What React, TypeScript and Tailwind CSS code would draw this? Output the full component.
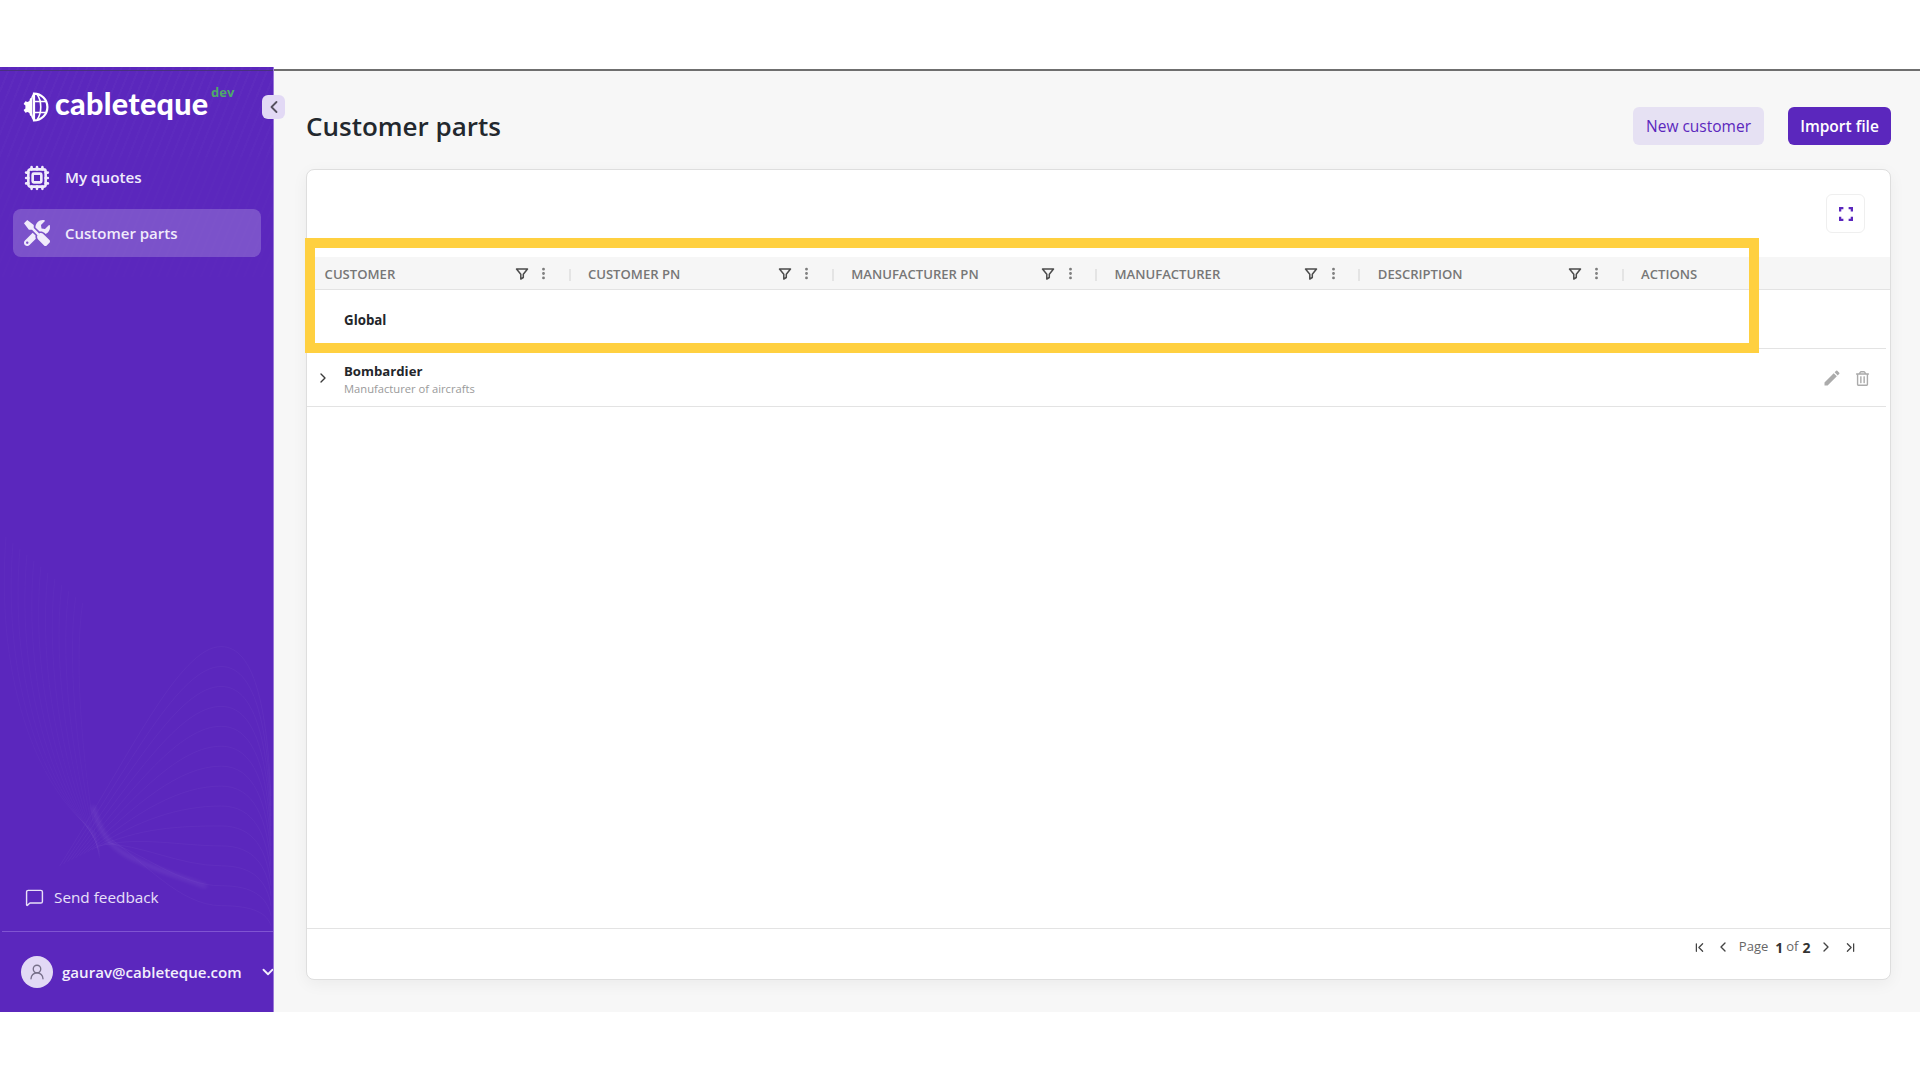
import { ChevronDown, ChevronFirst, ChevronLast, ChevronLeft, ChevronRight, Cpu, EllipsisVertical, MessageSquare, UserRound } from "lucide-react";
import { FaRegTrashAlt, FaTools } from "react-icons/fa";
import { MdEdit } from "react-icons/md";

const columns = ["Customer", "Customer PN", "Manufacturer PN", "Manufacturer", "Description"];
const contours = Array.from({ length: 14 }, (_, i) => i);
const rings = Array.from({ length: 12 }, (_, i) => i);

function LogoMark() {
  return (
    <svg viewBox="0 0 30 30" className="h-[30px] w-[30px] shrink-0" fill="none">
      {/* half gear */}
      <path d="M10.4 5.6 8 6.4 7.4 9 5.6 10 3.4 9.2 1.6 12l1.8 1.5v3L1.6 18l1.8 2.8 2.2-.8 1.8 1 .6 2.6 2.4.8z" fill="#fff" />
      {/* half globe */}
      <path d="M12 1.6a13.4 13.4 0 1 1 0 26.8z" stroke="#fff" strokeWidth="2.2" />
      <path d="M12 1.6C7.5 8 7.5 22 12 28.4" stroke="#fff" strokeWidth="1.6" />
      <path d="M15 2.2c5 6.5 5 19 0 25.6" stroke="#fff" strokeWidth="1.6" />
      <path d="M12 9.5h13M12 20.5h13" stroke="#fff" strokeWidth="1.5" />
    </svg>
  );
}

function SidebarArt() {
  return (
    <svg viewBox="0 0 274 945" className="pointer-events-none absolute inset-0 h-full w-full" fill="none">
      {contours.map((i) => (
        <path
          key={i}
          d={`M${60 + i * 4} ${800 - i * 2} C ${130 + i} ${690 + i * 8}, ${180} ${580 + i * 20}, ${222} ${580 + i * 20} C ${255} ${580 + i * 20}, ${268} ${640 + i * 16}, ${272} ${730 + i * 10}`}
          stroke="#fff"
          strokeOpacity="0.035"
        />
      ))}
      {rings.map((i) => (
        <path
          key={i}
          d={`M${6 + i * 7} ${470 + i * 6} C ${i * 7 - 4} ${600}, ${30 + i * 5} ${720}, ${100} ${770 + i * 2}`}
          stroke="#fff"
          strokeOpacity="0.025"
        />
      ))}
      <path
        d="M93 740 C 100 765, 108 778, 125 788 C 150 803, 180 810, 207 821"
        stroke="#fff"
        strokeOpacity="0.1"
        strokeWidth="3"
        className="blur-[2px]"
      />
    </svg>
  );
}

function HeaderCell({ label }: { label: string }) {
  return (
    <div className="relative flex h-full w-[263.3px] shrink-0 items-center pl-4 pt-[3px]">
      <span className="text-[13.1px] font-semibold uppercase leading-none text-[#777]">{label}</span>
      <svg viewBox="0 0 14 14" className="absolute left-[206px] top-[10px] h-[14px] w-[14px]" fill="none" stroke="#4b4b4b" strokeWidth="1.5" strokeLinejoin="round">
        <path d="M1.5 2h11L8.3 7.2v3.3L5.8 12V7.2z" />
      </svg>
      <EllipsisVertical className="absolute left-[227.5px] top-[9px] h-[15px] w-[15px] text-[#7a7a7a]" strokeWidth={2.5} />
      <span className="absolute left-[260px] top-[12px] h-[12px] w-[2px] bg-[#e4e4e4]" />
    </div>
  );
}

export default function App() {
  return (
    <div className="relative h-screen w-full overflow-hidden bg-white pt-[67px] font-['Open_Sans',sans-serif]">
      <div className="flex h-[945px]">
        <aside className="relative flex w-[274px] shrink-0 flex-col overflow-hidden border-r border-[#9a78d8] bg-[#5b27bd] text-white">
          <div className="absolute inset-x-0 top-0 h-[300px] bg-[repeating-linear-gradient(112deg,rgba(255,255,255,0.02)_0px,rgba(255,255,255,0.02)_2px,transparent_2px,transparent_8px)] [mask-image:linear-gradient(to_bottom,black,transparent)]" />
          <SidebarArt />
          <div className="relative mt-[3px] h-[1px] bg-[#47307f]" />

          <div className="relative ml-[22px] mt-[21px] flex items-center gap-[3px]">
            <LogoMark />
            <span className="mt-[-8px] font-['Lato',sans-serif] text-[30.5px] font-black leading-[32px] tracking-[0.3px]">cableteque</span>
            <span className="absolute left-[189px] top-[-9px] text-[13px] font-bold text-[#4fa96a]">dev</span>
          </div>

          <nav className="relative mt-[32px] flex flex-col gap-[8px] pl-[13px] pr-[12px]">
            <a className="flex h-[47px] items-center gap-[15px] rounded-lg pl-[11px] text-[15.2px] font-semibold text-[#f0ebfb]">
              <Cpu className="h-[26px] w-[26px]" strokeWidth={2.4} />
              My quotes
            </a>
            <a className="flex h-[48px] items-center gap-[15px] rounded-lg bg-white/20 pl-[11px] text-[15px] font-semibold text-[#f0ebfb]">
              <FaTools className="h-[26px] w-[26px]" />
              Customer parts
            </a>
          </nav>

          <div className="flex-1" />

          <div className="relative flex items-center gap-[10px] pb-[22px] pl-[25px] text-[15.3px] text-[#e8e0f8]">
            <MessageSquare className="h-[19px] w-[19px]" strokeWidth={1.8} />
            Send feedback
          </div>
          <div className="relative ml-[2px] h-[1px] bg-[#8054d2]" />
          <div className="relative flex h-[80px] items-center pl-[21px]">
            <span className="flex h-[32px] w-[32px] shrink-0 items-center justify-center rounded-full bg-[#e2d9f5]">
              <UserRound className="h-[18px] w-[18px] text-[#77708a]" strokeWidth={1.8} />
            </span>
            <span className="ml-[9px] shrink-0 text-[15.1px] font-semibold text-[#f3effc]">gaurav@cableteque.com</span>
            <ChevronDown className="ml-[17px] h-[18px] w-[18px] shrink-0 text-[#f3effc]" strokeWidth={2.4} />
          </div>
        </aside>

        <main className="mt-[2px] flex min-w-0 flex-1 flex-col border-t-2 border-[#6f6f6f] bg-[#f7f7f7] pl-[32px] pr-[29px]">
          <header className="flex h-[98px] items-start justify-between pt-[36px]">
            <h1 className="text-[26px] font-semibold leading-[38px] text-[#23282e]">Customer parts</h1>
            <div className="flex gap-[24px]">
              <button className="h-[38px] w-[131px] rounded-md bg-[#e6e1f3] pt-[2px] text-[15.5px] font-medium text-[#5b27bd]">New customer</button>
              <button className="h-[38px] w-[103px] rounded-md bg-[#5b27bd] pt-[2px] text-[15.5px] font-semibold text-white">Import file</button>
            </div>
          </header>

          <section className="flex h-[811px] flex-col rounded-lg border border-[#dedede] bg-white shadow-[0_4px_16px_rgba(0,0,0,0.05)]">
            <div className="flex h-[87px] shrink-0 items-start justify-end pr-[24px] pt-[24px]">
              <button className="mr-[1px] flex h-[39px] w-[39px] items-center justify-center rounded-md border border-[#efefef] bg-white">
                <svg viewBox="0 0 16 16" className="h-[14px] w-[14px]" fill="none" stroke="#5b27bd" strokeWidth="2.6">
                  <path d="M1.3 5V1.3H5M11 1.3h3.7V5M14.7 11v3.7H11M5 14.7H1.3V11" />
                </svg>
              </button>
            </div>

            <div className="flex h-[33px] shrink-0 border-b border-[#e3e3e3] bg-[#f6f6f6] pl-[1.6px]">
              {columns.map((label) => (
                <HeaderCell key={label} label={label} />
              ))}
              <div className="flex items-center pl-4 pt-[3px] text-[13.1px] font-semibold uppercase leading-none text-[#777]">Actions</div>
            </div>

            <div className="mr-[4px] flex h-[59px] shrink-0 items-center border-b border-[#e3e3e3] pl-[37px] pt-[3px] text-[13.3px] font-bold text-[#23262a]">Global</div>

            <div className="mr-[4px] flex h-[58px] shrink-0 items-center border-b border-[#e3e3e3] pt-[1px]">
              <ChevronRight className="ml-[8px] h-[16px] w-[16px] text-[#3a3a3a]" strokeWidth={2} />
              <div className="ml-[13px] mt-[2px] flex flex-col">
                <span className="text-[13.2px] font-bold leading-[18px] text-[#23262a]">Bombardier</span>
                <span className="text-[11.2px] leading-[17px] text-[#9a9a9a]">Manufacturer of aircrafts</span>
              </div>
              <div className="ml-auto flex items-center gap-[13px] pr-[16px]">
                <MdEdit className="h-[20px] w-[20px] text-[#ababab]" />
                <FaRegTrashAlt className="h-[15px] w-[15px] text-[#ababab]" />
              </div>
            </div>

            <div className="flex-1" />

            <footer className="flex h-[51px] shrink-0 items-center justify-end border-t border-[#e3e3e3] pb-[14px] pr-[32px] text-[13px] text-[#666]">
              <ChevronFirst className="h-[15px] w-[15px] text-[#444]" strokeWidth={2} />
              <ChevronLeft className="ml-[8px] h-[16px] w-[16px] text-[#444]" strokeWidth={2} />
              <span className="ml-[7.5px]">Page</span>
              <span className="ml-[7px] text-[14px] font-bold text-[#333]">1</span>
              <span className="ml-[3px]">of</span>
              <span className="ml-[4px] text-[14px] font-bold text-[#333]">2</span>
              <ChevronRight className="ml-[7.5px] h-[16px] w-[16px] text-[#444]" strokeWidth={2} />
              <ChevronLast className="ml-[9px] h-[15px] w-[15px] text-[#444]" strokeWidth={2} />
            </footer>
          </section>
        </main>
      </div>

      <button className="absolute left-[262px] top-[95px] flex h-[24px] w-[23px] items-center justify-center rounded-md bg-[#e2d9f5]">
        <ChevronLeft className="h-[20px] w-[20px] text-[#55505f]" strokeWidth={2.2} />
      </button>

      <div className="pointer-events-none absolute left-[305px] top-[238px] h-[115px] w-[1454px] border-[10px] border-[#ffd040]" />
    </div>
  );
}
